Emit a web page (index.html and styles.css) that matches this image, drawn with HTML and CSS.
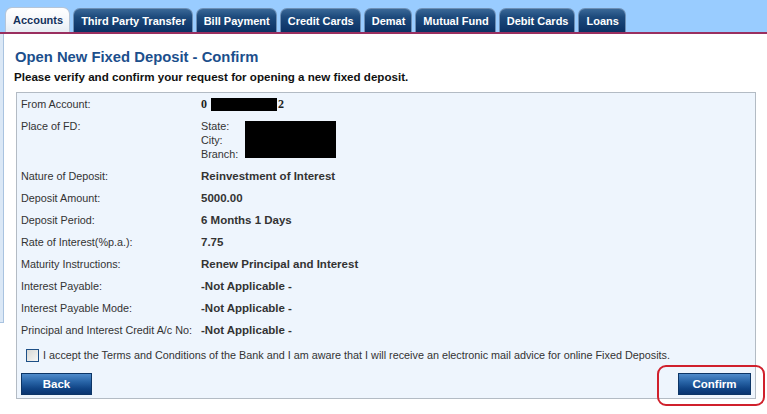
FILE: index.html
```html
<!DOCTYPE html>
<html>
<head>
<meta charset="utf-8">
<link rel="stylesheet" href="styles.css">
</head>
<body>
<div class="header">
  <div class="tab active">Accounts</div>
  <div class="tab">Third Party Transfer</div>
  <div class="tab">Bill Payment</div>
  <div class="tab">Credit Cards</div>
  <div class="tab">Demat</div>
  <div class="tab">Mutual Fund</div>
  <div class="tab">Debit Cards</div>
  <div class="tab">Loans</div>
</div>
<div class="page">
  <div class="sidebar"></div>
  <div class="content">
    <h1 class="title">Open New Fixed Deposit - Confirm</h1>
    <p class="intro">Please verify and confirm your request for opening a new fixed deposit.</p>
    <div class="panel">
      <div class="row"><div class="label">From Account:</div><div class="value acct"><span class="digit">0</span><span class="redact-acct"></span><span class="digit">2</span></div></div>
      <div class="row"><div class="label">Place of FD:</div>
        <div class="place">
          <div class="place-labels"><div>State:</div><div>City:</div><div>Branch:</div></div>
          <div class="redact-place"></div>
        </div>
      </div>
      <div class="row"><div class="label">Nature of Deposit:</div><div class="value">Reinvestment of Interest</div></div>
      <div class="row"><div class="label">Deposit Amount:</div><div class="value">5000.00</div></div>
      <div class="row"><div class="label">Deposit Period:</div><div class="value">6 Months 1 Days</div></div>
      <div class="row"><div class="label">Rate of Interest(%p.a.):</div><div class="value">7.75</div></div>
      <div class="row"><div class="label">Maturity Instructions:</div><div class="value">Renew Principal and Interest</div></div>
      <div class="row"><div class="label">Interest Payable:</div><div class="value">-Not Applicable -</div></div>
      <div class="row"><div class="label">Interest Payable Mode:</div><div class="value">-Not Applicable -</div></div>
      <div class="row"><div class="label">Principal and Interest Credit A/c No:</div><div class="value">-Not Applicable -</div></div>
      <label class="accept"><input type="checkbox" class="check"><span>I accept the Terms and Conditions of the Bank and I am aware that I will receive an electronic mail advice for online Fixed Deposits.</span></label>
      <div class="actions">
        <button class="btn back">Back</button>
        <button class="btn confirm">Confirm</button>
      </div>
    </div>
  </div>
</div>
<div class="highlight"></div>
</body>
</html>
```
FILE: styles.css
```css
html, body {
  margin: 0;
  padding: 0;
  background: #ffffff;
  overflow: hidden;
}
body {
  font-family: "Liberation Sans", Arial, sans-serif;
  font-size: 10.8px;
  color: #333333;
  position: relative;
  width: 767px;
  height: 414px;
}
.header {
  height: 32px;
  background: #99ccff;
  border-bottom: 2px solid #9a2f5f;
  display: flex;
  align-items: flex-end;
  gap: 3px;
  padding-left: 5px;
}
.tab {
  height: 24px;
  line-height: 25px;
  padding: 0 6px 0 7px;
  border-radius: 7px 7px 0 0;
  font-weight: bold;
  font-size: 11px;
  color: #ffffff;
  background: linear-gradient(#3a6897 0%, #1d4a7c 35%, #0b3164 100%);
  border: 1px solid #6d8fb5;
  border-bottom: none;
  box-sizing: border-box;
}
.tab.active {
  height: 25px;
  color: #14325c;
  background: linear-gradient(#ffffff 0%, #f3f6fa 60%, #e6ecf3 100%);
  border-color: #b5c5d8;
}
.page {
  display: flex;
}
.sidebar {
  width: 3px;
  height: 288px;
  background: #dbe8f6;
  border-right: 1px solid #a9c3e0;
  border-bottom: 1px solid #a9c3e0;
  flex: none;
}
.content {
  flex: 1;
  padding: 0 11px 0 10px;
}
.title {
  margin: 14px 0 0 1px;
  font-size: 14.8px;
  line-height: 18px;
  font-weight: bold;
  color: #1c4f8c;
}
.intro {
  margin: 4px 0 0 0;
  font-size: 11.6px;
  line-height: 14px;
  font-weight: bold;
  color: #111111;
}
.panel {
  margin: 8px 0 0 2px;
  border: 1px solid #b3bbc4;
  background: #eef5fd;
  padding: 0 4px 3px 4px;
}
.row {
  display: flex;
  padding: 4px 0;
  line-height: 14px;
}
.label {
  width: 180px;
  flex: none;
}
.value {
  font-weight: bold;
  font-size: 11.5px;
}
.acct {
  display: flex;
  align-items: center;
}
.digit {
  font-family: "Liberation Serif", "Times New Roman", serif;
  font-size: 12px;
  font-weight: bold;
  color: #222;
}
.redact-acct {
  display: inline-block;
  width: 66px;
  height: 13px;
  background: #000;
  margin: 0 1px 0 4px;
}
.place {
  display: flex;
  align-items: flex-start;
}
.place-labels div {
  line-height: 14px;
}
.redact-place {
  width: 91px;
  height: 37px;
  background: #000;
  margin: 2px 0 0 7px;
}
.accept {
  display: flex;
  align-items: center;
  gap: 4px;
  margin-top: 3px;
  padding: 4px 0 4px 5px;
  line-height: 14px;
}
.check {
  appearance: none;
  -webkit-appearance: none;
  width: 13px;
  height: 13px;
  margin: 0;
  border: 1px solid #1d4f86;
  background: linear-gradient(135deg, #d8d8d4, #f7f7f5);
  box-sizing: border-box;
}
.actions {
  display: flex;
  justify-content: space-between;
  margin-top: 7px;
}
.btn {
  height: 22px;
  border: 1px solid #0c3566;
  background: linear-gradient(#4f8bcb 0%, #2763a6 40%, #0f4283 75%, #0a3570 100%);
  color: #ffffff;
  font-family: "Liberation Sans", Arial, sans-serif;
  font-weight: bold;
  font-size: 11.5px;
  padding: 0;
  cursor: pointer;
}
.back {
  width: 71px;
}
.confirm {
  width: 73px;
}
.highlight {
  position: absolute;
  left: 657px;
  top: 365px;
  width: 104px;
  height: 37px;
  border: 2px solid #d0202c;
  border-radius: 9px;
}
```
